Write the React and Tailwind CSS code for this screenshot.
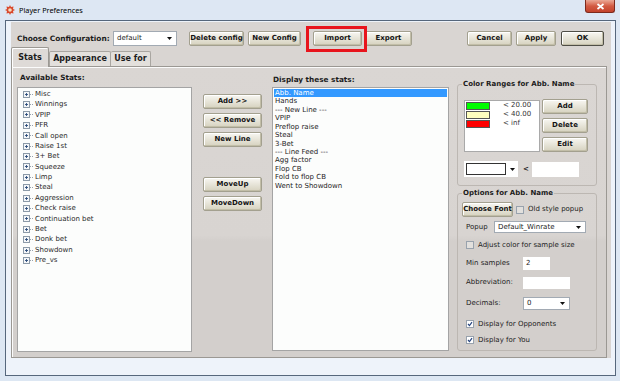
import React from "react";

const btnBase =
  "flex items-center justify-center whitespace-nowrap h-[15px] rounded-[2px] border bg-linear-to-b from-[#f8f7f2] to-[#d6d2bf] shadow-[inset_-1px_-1px_0_#c2bea8,inset_1px_1px_0_#ffffff] font-bold text-[7px] text-[#141414]";

function Btn({ className = "", children }) {
  return <div className={`${btnBase} border-[#a3a08f] ${className}`}>{children}</div>;
}

function Check({ checked, className = "" }) {
  return (
    <div
      className={`flex items-center justify-center w-[8px] h-[8px] border border-[#98a2ad] ${
        checked ? "bg-white" : "bg-[#e2e0dd]"
      } ${className}`}
    >
      {checked && (
        <svg width="6" height="6" viewBox="0 0 6 6">
          <path d="M1 3 L2.5 4.6 L5 1.2" fill="none" stroke="#27457f" strokeWidth="1.2" />
        </svg>
      )}
    </div>
  );
}

function Arrow({ className = "" }) {
  return (
    <svg width="5" height="3" viewBox="0 0 5 3" className={className}>
      <path d="M0 0 H5 L2.5 3 Z" fill="#111" />
    </svg>
  );
}

function Select({ value, className = "" }) {
  return (
    <div className={`flex items-center bg-white border border-[#a2aab3] ${className}`}>
      <span className="flex-1 pl-[3px] whitespace-nowrap">{value}</span>
      <Arrow className="mr-[4px]" />
    </div>
  );
}

const available = [
  "Misc",
  "Winnings",
  "VPIP",
  "PFR",
  "Call open",
  "Raise 1st",
  "3+ Bet",
  "Squeeze",
  "Limp",
  "Steal",
  "Aggression",
  "Check raise",
  "Continuation bet",
  "Bet",
  "Donk bet",
  "Showdown",
  "Pre_vs",
];

const displayed = [
  "Abb. Name",
  "Hands",
  "--- New Line ---",
  "VPIP",
  "Preflop raise",
  "Steal",
  "3-Bet",
  "--- Line Feed ---",
  "Agg factor",
  "Flop CB",
  "Fold to flop CB",
  "Went to Showdown",
];

const ranges = [
  ["bg-[#00ff00]", "< 20.00"],
  ["bg-[#ffffbf]", "< 40.00"],
  ["bg-[#ff0000]", "< inf"],
];

export default function App() {
  return (
    <div className="w-[620px] h-[381px] overflow-hidden bg-[#dde7f3] font-['DejaVu_Sans',sans-serif] text-[7px] text-[#1c1c1c]">
      {/* title bar */}
      <div className="flex items-start h-[20px]">
        <svg width="10" height="10" viewBox="0 0 10 10" className="ml-[5px] mt-[5px]">
          <path
            d="M5 0 L6 2 L8.5 1.5 L8 4 L10 5 L8 6 L8.5 8.5 L6 8 L5 10 L4 8 L1.5 8.5 L2 6 L0 5 L2 4 L1.5 1.5 L4 2 Z"
            fill="#d9482b"
          />
          <circle cx="5" cy="5" r="1.8" fill="#f7dcc0" />
        </svg>
        <span className="ml-[4px] mt-[5px] font-['Noto_Sans',sans-serif] text-[7.3px] leading-[10px] text-black">
          Player Preferences
        </span>
        <div className="flex items-center justify-center ml-auto mr-[5px] w-[30px] h-[13px] rounded-b-[3px] border border-t-0 border-[#7d2a1c] bg-linear-to-b from-[#eaa895] via-[#d35b43] to-[#c4432b]">
          <svg width="9" height="7" viewBox="0 0 9 7">
            <path d="M1.5 1 L7.5 6 M7.5 1 L1.5 6" stroke="#fff" strokeWidth="1.7" />
          </svg>
        </div>
      </div>

      {/* client */}
      <div className="ml-[5px] w-[611px] h-[356px] border border-[#56677c] bg-[#eef3fa] pl-[5px] pt-[1px]">
        <div className="w-[600px] h-[336px] bg-[#d9d5d2]">
          {/* top row */}
          <div className="flex items-start pl-[6px] pt-[9px] h-[24px]">
            <span className="w-[96px] font-bold text-[7.4px] leading-[15px] whitespace-nowrap">
              Choose Configuration:
            </span>
            <Select value="default" className="w-[64px] h-[15px]" />
            <Btn className="ml-[12px] w-[55px]">Delete config</Btn>
            <Btn className="ml-[4px] w-[53px]">New Config</Btn>
            <div className="relative ml-[12px]">
              <Btn className="w-[49px]">Import</Btn>
              <span className="absolute -left-[7px] -right-[5px] -top-[5px] -bottom-[6px] border-[3px] border-[#e8141c]" />
            </div>
            <Btn className="ml-[3px] w-[47px]">Export</Btn>
            <Btn className="ml-[55px] w-[45px]">Cancel</Btn>
            <Btn className="ml-[4px] w-[40px]">Apply</Btn>
            <div className={`${btnBase} ml-[5px] w-[43px] border-[#4f4e46]`}>OK</div>
          </div>

          {/* tabs */}
          <div className="flex items-end h-[20px] font-bold text-[8px]">
            <div className="relative z-10 -mb-px flex items-center justify-center w-[38px] h-[20px] rounded-t-[2px] border border-b-0 border-[#9b9893] bg-[#dedad7] shadow-[inset_1px_1px_0_#ffffff]">
              Stats
            </div>
            <div className="flex items-center justify-center w-[62px] h-[15px] rounded-t-[2px] border border-b-0 border-[#a9a6a1] bg-[#e3e0dc]">
              Appearance
            </div>
            <div className="flex items-center justify-center w-[40px] h-[15px] rounded-t-[2px] border border-b-0 border-l-0 border-[#a9a6a1] bg-[#e3e0dc]">
              Use for
            </div>
          </div>

          {/* tab panel */}
          <div className="flex w-[596px] h-[292px] border border-[#9b9893] shadow-[inset_1px_1px_0_#fbfbfb] bg-[linear-gradient(to_bottom,#dad6d3_0%,#d8d4d1_58%,#d3cfcc_60%,#d3cfcc_100%)] pl-[5px] pt-[6px]">
            {/* available stats */}
            <div className="flex flex-col w-[175px]">
              <div className="h-[14px] font-bold text-[7.3px] leading-[10px] pl-[3px] whitespace-nowrap">
                Available Stats:
              </div>
              <div className="w-[175px] h-[265px] bg-[#fcfdfc] border border-[#a4a4a4] pt-[1px]">
                {available.map((s) => (
                  <div key={s} className="flex items-center h-[10.4px] text-[#2a2a2a]">
                    <svg width="11" height="7" viewBox="0 0 11 7" className="ml-[5px]">
                      <rect x="0.5" y="0.5" width="6" height="6" fill="#f4f6f8" stroke="#8c9aa8" />
                      <path d="M2 3.5 H5 M3.5 2 V5" stroke="#2d4d7a" strokeWidth="0.9" />
                      <path d="M7 3.5 H11" stroke="#9aa4ae" strokeDasharray="1 1" />
                    </svg>
                    <span className="ml-[1px] whitespace-nowrap">{s}</span>
                  </div>
                ))}
              </div>
            </div>

            {/* buttons */}
            <div className="flex flex-col ml-[11px] w-[59px] pt-[21px]">
              <Btn className="w-[59px]">Add &gt;&gt;</Btn>
              <Btn className="w-[59px] mt-[4px]">&lt;&lt; Remove</Btn>
              <Btn className="w-[59px] mt-[4px]">New Line</Btn>
              <Btn className="w-[59px] mt-[30px]">MoveUp</Btn>
              <Btn className="w-[59px] mt-[4px]">MoveDown</Btn>
            </div>

            {/* display these stats */}
            <div className="flex flex-col ml-[10px] w-[177px]">
              <div className="h-[14px] font-bold text-[7.3px] leading-[14px] pl-[1px] whitespace-nowrap">
                Display these stats:
              </div>
              <div className="w-[177px] h-[264px] bg-[#fcfdfc] border border-[#a4a4a4] p-[1px]">
                {displayed.map((s, i) => (
                  <div
                    key={i}
                    className={`flex items-center h-[8.45px] pl-[1px] whitespace-nowrap ${
                      i === 0 ? "bg-[#3399ff] text-white" : "text-[#1c1c1c]"
                    }`}
                  >
                    {s}
                  </div>
                ))}
              </div>
            </div>

            {/* groups */}
            <div className="flex flex-col ml-[8px] w-[140px]">
              <fieldset className="mt-[6px] h-[107px] rounded-[3px] border border-[#bcb7b2]">
                <legend className="ml-[4px] px-[1px] font-bold leading-[10px] whitespace-nowrap">
                  Color Ranges for Abb. Name
                </legend>
                <div className="flex mt-[11px] ml-[6px]">
                  <div className="w-[76px] h-[52px] bg-white border border-[#a9a9a9] pl-[1px]">
                    {ranges.map(([c, t]) => (
                      <div key={t} className="flex items-center h-[9px]">
                        <div className={`w-[24px] h-[8px] border border-[#555] ${c}`} />
                        <span className="ml-[13px] text-[#333]">{t}</span>
                      </div>
                    ))}
                  </div>
                  <div className="flex flex-col ml-[2px] -mt-px">
                    <Btn className="w-[46px]">Add</Btn>
                    <Btn className="w-[46px] mt-[4px]">Delete</Btn>
                    <Btn className="w-[46px] mt-[4px]">Edit</Btn>
                  </div>
                </div>
                <div className="flex items-center mt-[9px] ml-[6px]">
                  <div className="flex items-center w-[54px] h-[16px] bg-white">
                    <div className="ml-[2px] w-[40px] h-[12px] border border-[#333] bg-white" />
                    <Arrow className="ml-[4px]" />
                  </div>
                  <span className="ml-[5px] w-[9px] font-bold">&lt;</span>
                  <div className="w-[47px] h-[15px] bg-white" />
                </div>
              </fieldset>

              <fieldset className="mt-[2px] h-[163px] rounded-[3px] border border-[#bcb7b2]">
                <legend className="ml-[4px] px-[1px] font-bold leading-[10px] whitespace-nowrap">
                  Options for Abb. Name
                </legend>
                <div className="flex flex-col pl-[4px]">
                  <div className="flex items-center mt-[4px]">
                    <Btn className="w-[51px]">Choose Font</Btn>
                    <Check className="ml-[3px]" />
                    <span className="ml-[4px] whitespace-nowrap">Old style popup</span>
                  </div>
                  <div className="flex items-center mt-[4px] pl-[4px]">
                    <span className="w-[28px]">Popup</span>
                    <Select value="Default_Winrate" className="w-[92px] h-[12px]" />
                  </div>
                  <div className="flex items-center mt-[7px] pl-[4px]">
                    <Check />
                    <span className="ml-[4px] whitespace-nowrap">Adjust color for sample size</span>
                  </div>
                  <div className="flex items-center mt-[6px] pl-[4px]">
                    <span className="w-[57px]">Min samples</span>
                    <div className="flex items-center w-[27px] h-[13px] bg-white pl-[3px]">2</div>
                  </div>
                  <div className="flex items-center mt-[7px] pl-[4px]">
                    <span className="w-[57px]">Abbreviation:</span>
                    <div className="w-[47px] h-[12px] bg-white" />
                  </div>
                  <div className="flex items-center mt-[8px] pl-[4px]">
                    <span className="w-[57px]">Decimals:</span>
                    <Select value="0" className="w-[47px] h-[13px]" />
                  </div>
                  <div className="flex items-center mt-[9px] pl-[4px]">
                    <Check checked />
                    <span className="ml-[4px] whitespace-nowrap">Display for Opponents</span>
                  </div>
                  <div className="flex items-center mt-[6px] pl-[4px]">
                    <Check checked />
                    <span className="ml-[4px] whitespace-nowrap">Display for You</span>
                  </div>
                </div>
              </fieldset>
            </div>
          </div>
        </div>
      </div>
    </div>
  );
}
